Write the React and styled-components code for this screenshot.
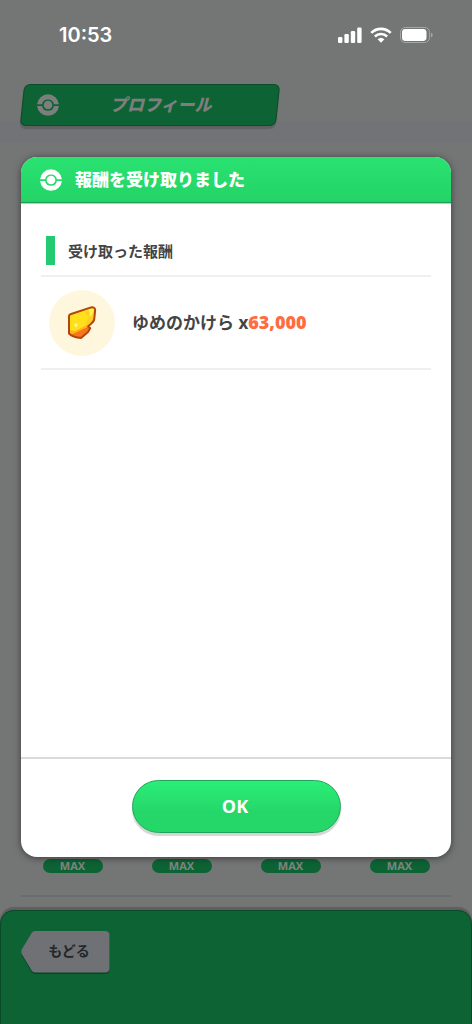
import React from "react";
import styled, { createGlobalStyle } from "styled-components";

const GlobalStyle = createGlobalStyle`
  *, *::before, *::after { box-sizing: border-box; }
  body { margin: 0; background: #747675; }
  h1, h2, p, ul { margin: 0; padding: 0; }
  button { font: inherit; cursor: pointer; }
`;

const Page = styled.div`
  position: relative;
  display: flex;
  flex-direction: column;
  min-height: 100vh;
  background: linear-gradient(#747675 0 121px, #727376 121px 143px, #747675 143px);
  font-family: "Open Sans", "Noto Sans CJK JP", sans-serif;
  font-weight: 700;
  color: #444;
`;

const StatusBar = styled.header`
  display: flex;
  align-items: center;
  justify-content: space-between;
  height: 70px;
  padding: 0 39px 0 59px;
  color: #fff;
`;

const Clock = styled.time`
  font: 600 20px/24px Inter, sans-serif;
`;

const StatusIcons = styled.div`
  display: flex;
  align-items: center;
  gap: 8px;
  svg { display: block; }
`;

const Ribbon = styled.div`
  position: relative;
  isolation: isolate;
  display: flex;
  align-items: center;
  width: 55%;
  height: 42px;
  margin: 14px 0 0 20px;
  padding-left: 17px;
  color: #7c7f7d;

  &::before {
    content: "";
    position: absolute;
    inset: 0 2px;
    z-index: -1;
    background: #0d6334;
    border: 1px solid #0c4b2b;
    border-radius: 6px;
    box-shadow: 0 3px 1px #5f6163;
    transform: skewX(-6deg);
  }
`;

const RibbonTitle = styled.h1`
  flex: 1;
  padding-right: 17px;
  text-align: center;
  font-size: 17px;
  line-height: 24px;
  font-style: italic;
  font-weight: 900;
`;

const Badges = styled.ul`
  display: grid;
  grid-template-columns: repeat(4, 1fr);
  justify-items: center;
  margin-top: auto;
  padding: 0 18px;
  list-style: none;
`;

const Badge = styled.li`
  width: 60px;
  height: 14px;
  border-radius: 7px;
  background: #0d6334;
  color: #828583;
  font-size: 11px;
  line-height: 14px;
  text-align: center;
`;

const Divider = styled.hr`
  width: calc(100% - 42px);
  height: 2px;
  margin: 22px auto 13px;
  border: 0;
  background: #6a6b70;
`;

const Footer = styled.footer`
  height: 114px;
  padding: 20px;
  background: #0d6334;
  border: 1px solid #0b4a29;
  border-bottom: 0;
  border-radius: 14px 14px 0 0;
  box-shadow: 0 -3px 1px #5e605f;
`;

const BackButton = styled.button`
  position: relative;
  isolation: isolate;
  width: 89px;
  height: 43px;
  padding: 0 0 4px 7px;
  border: 0;
  background: none;
  color: #22282b;
  font-size: 14px;
  line-height: 20px;

  svg { position: absolute; inset: 0; z-index: -1; }
`;

const Overlay = styled.div`
  position: absolute;
  inset: 0;
  display: flex;
  padding: 157px 21px 167px;
`;

const Dialog = styled.section`
  flex: 1;
  display: flex;
  flex-direction: column;
  overflow: hidden;
  border-radius: 16px;
  background: #fff;
  box-shadow: 0 1px 7px rgba(0, 0, 0, 0.5);
`;

const DialogHeader = styled.header`
  display: flex;
  align-items: center;
  gap: 13px;
  height: 46px;
  padding-left: 19px;
  background: linear-gradient(#29e271, #24d367);
  border-bottom: 1px solid #1b9f53;
  box-shadow: 0 1px #a9d8bd;
  color: #fff;
`;

const DialogTitle = styled.h2`
  font-size: 17px;
  line-height: 24px;
  font-weight: 900;
`;

const DialogBody = styled.div`
  flex: 1;
  padding: 33px 20px 0;
`;

const SectionTitle = styled.h2`
  display: flex;
  align-items: center;
  gap: 13px;
  height: 41px;
  padding: 0 0 10px 5px;
  border-bottom: 2px solid #efefef;
  font-size: 15px;
  line-height: 20px;

  &::before {
    content: "";
    width: 9px;
    height: 29px;
    background: #24ca72;
  }
`;

const Reward = styled.div`
  display: flex;
  align-items: center;
  gap: 17px;
  height: 93px;
  padding-left: 8px;
  border-bottom: 2px solid #efefef;
`;

const RewardIcon = styled.div`
  display: grid;
  place-items: center;
  width: 66px;
  height: 66px;
  border-radius: 50%;
  background: #fff7dd;
`;

const RewardText = styled.p`
  font-size: 17px;
  line-height: 24px;
`;

const Amount = styled.strong`
  color: #ff6c3f;
  font-size: 18px;
  font-weight: 800;
`;

const DialogFooter = styled.footer`
  display: flex;
  justify-content: center;
  height: 100px;
  padding-top: 21px;
  border-top: 2px solid #dadada;
`;

const OkButton = styled.button`
  width: 209px;
  height: 53px;
  padding: 0 2px 2px 0;
  border: 1px solid #1fa35a;
  border-radius: 27px;
  background: linear-gradient(#2bee78, #25d769 60%, #25d769);
  box-shadow: 0 3px 1px #d5d5d5;
  color: #fff;
  font-size: 18px;
  font-weight: 700;
  line-height: 24px;
`;

const Ball = ({ size = 22 }) => (
  <svg width={size} height={size} viewBox="0 0 22 22" fill="currentColor" aria-hidden="true">
    <path d="M.05 10.3A11 11 0 0 1 21.95 10.3H16.9A6 6 0 0 0 5.1 10.3Z" />
    <path d="M.05 11.9A11 11 0 0 0 21.95 11.9H16.9A6 6 0 0 1 5.1 11.9Z" />
    <circle cx="11" cy="11" r="4.3" />
  </svg>
);

const Signal = () => (
  <svg width="24" height="16" viewBox="0 0 24 16" fill="#fff" aria-hidden="true">
    <rect x="0" y="10" width="4.4" height="6" rx="1.2" />
    <rect x="6.4" y="7" width="4.4" height="9" rx="1.2" />
    <rect x="12.8" y="4" width="4.4" height="12" rx="1.2" />
    <rect x="19.2" y="0.5" width="4.4" height="15.5" rx="1.2" />
  </svg>
);

const Wifi = () => (
  <svg width="22" height="16" viewBox="0 0 22 16" fill="none" stroke="#fff" strokeWidth="2.7" aria-hidden="true">
    <path d="M1.3 5.9C6.8 .6 15.2 .6 20.7 5.9" />
    <path d="M4.9 9.4C8.3 6.2 13.7 6.2 17.1 9.4" />
    <path d="M7.6 12.3Q11 9.3 14.4 12.3L11 15.7Z" fill="#fff" stroke="none" />
  </svg>
);

const Battery = () => (
  <svg width="33" height="16" viewBox="0 0 33 16" aria-hidden="true">
    <rect x="0.5" y="0.5" width="29" height="15" rx="4.8" fill="none" stroke="#a5a7a6" />
    <rect x="2" y="2" width="24.5" height="12" rx="3.4" fill="#fff" />
    <path d="M31 5.5Q32.7 6.4 32.7 8T31 10.5Z" fill="#a5a7a6" />
  </svg>
);

const Shard = () => (
  <svg width="30" height="34" viewBox="0 0 30 34" aria-hidden="true">
    <path d="M2 10.2Q2 8.8 3.4 8.2L24 1.4Q28 .8 28.2 4L27.2 13.5Q26.8 15.8 21.2 20.2L23.2 22.2L21 26L14 32Q6 31.5 2 27.5Z" fill="#ffe01b" />
    <path d="M19 6L28 2L27.2 13.5L21 20L18 18L22 11Z" fill="#ffcf22" />
    <path d="M22 3L27 2.5L25.5 8L22.8 11Z" fill="#fff052" />
    <path d="M2 24L8 25L20 19L23 22L14 32L3 28Z" fill="#ffb41b" />
    <path d="M7 27.5L20.6 21L23 22.2L14 32Q7 31 4 28.5Z" fill="#f8751d" />
    <path d="M9 17L11 19L9 21.5L7 19Z" fill="#fff49a" />
    <path d="M2 10.2Q2 8.8 3.4 8.2L24 1.4Q28 .8 28.2 4L27.2 13.5Q26.8 15.8 21.2 20.2L23.2 22.2L21 26L14 32Q6 31.5 2 27.5Z" fill="none" stroke="#b3440d" strokeWidth="2" strokeLinejoin="round" />
  </svg>
);

const BackShape = () => (
  <svg width="89" height="43" viewBox="0 0 89 43" aria-hidden="true">
    <path d="M14 1.5H84Q88.5 1.5 88.5 6V38.5Q88.5 43 84 43H14Q12 43 10.8 41.3L1 25Q-.5 22 1 19.5L10.8 3.2Q12 1.5 14 1.5Z" fill="#0a4426" />
    <path d="M14 0H84Q88.5 0 88.5 4.5V37Q88.5 41.5 84 41.5H14Q12 41.5 10.8 39.8L1 23.5Q-.5 20.5 1 18L10.8 1.7Q12 0 14 0Z" fill="#707174" />
  </svg>
);

export default function App() {
  return (
    <Page>
      <GlobalStyle />
      <StatusBar>
        <Clock>10:53</Clock>
        <StatusIcons>
          <Signal />
          <Wifi />
          <Battery />
        </StatusIcons>
      </StatusBar>
      <Ribbon>
        <Ball />
        <RibbonTitle>プロフィール</RibbonTitle>
      </Ribbon>
      <Badges>
        {[1, 2, 3, 4].map((slot) => (
          <Badge key={slot}>MAX</Badge>
        ))}
      </Badges>
      <Divider />
      <Footer>
        <BackButton type="button">
          <BackShape />
          もどる
        </BackButton>
      </Footer>

      <Overlay>
        <Dialog role="dialog" aria-modal="true" aria-labelledby="dialog-title">
          <DialogHeader>
            <Ball />
            <DialogTitle id="dialog-title">報酬を受け取りました</DialogTitle>
          </DialogHeader>
          <DialogBody>
            <SectionTitle>受け取った報酬</SectionTitle>
            <Reward>
              <RewardIcon>
                <Shard />
              </RewardIcon>
              <RewardText>
                ゆめのかけら x<Amount>63,000</Amount>
              </RewardText>
            </Reward>
          </DialogBody>
          <DialogFooter>
            <OkButton type="button">OK</OkButton>
          </DialogFooter>
        </Dialog>
      </Overlay>
    </Page>
  );
}
